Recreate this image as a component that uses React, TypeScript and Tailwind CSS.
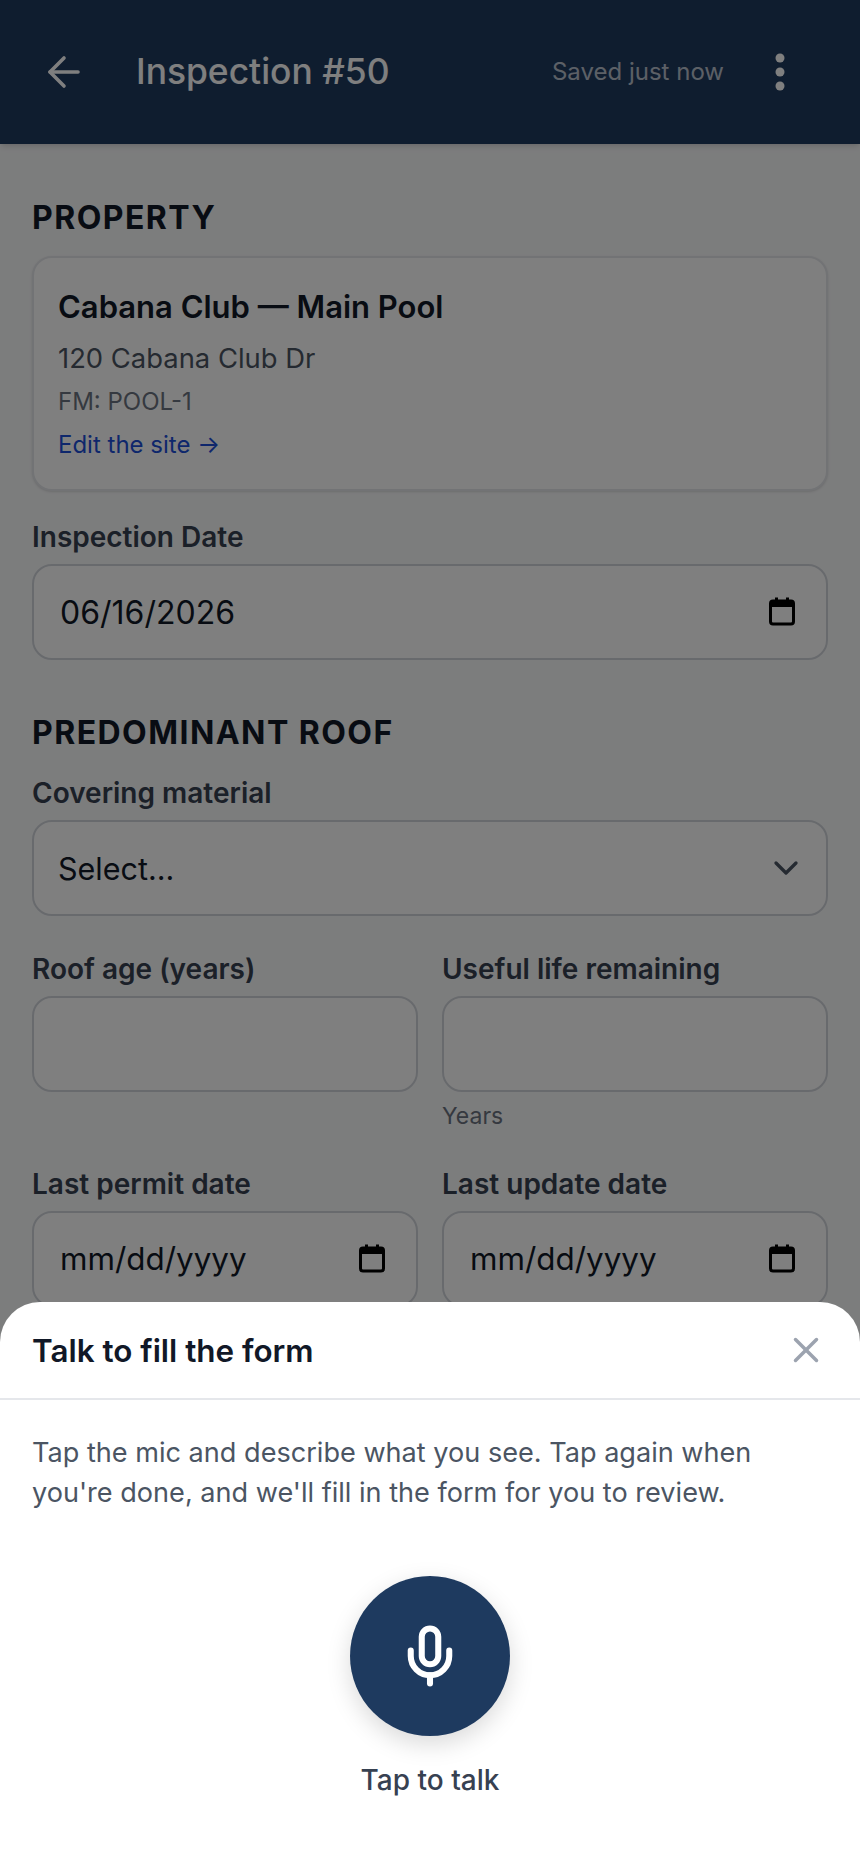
import React from 'react';
import { ArrowLeft, ChevronDown, Mic, X } from 'lucide-react';

const CalendarIcon = () => (
    <svg width="30" height="30" viewBox="0 0 30 30" className="-mt-[2px] shrink-0">
        <path d="M8 1.5h3v3H8zM19 1.5h3v3h-3z" fill="#000" />
        <rect x="3.5" y="5" width="23" height="23" rx="2.5" fill="none" stroke="#000" strokeWidth="3" />
        <rect x="3.5" y="5" width="23" height="6" fill="#000" />
    </svg>
);

const Label: React.FC<{ text: string }> = ({ text }) => (
    <p className="text-[28px] leading-[40px] font-semibold text-[#374151]">{text}</p>
);

const Heading: React.FC<{ text: string }> = ({ text }) => (
    <h2 className="text-[32px] leading-[40px] font-bold tracking-[1.45px] text-[#111827]">{text}</h2>
);

const InputBox: React.FC<{ children?: React.ReactNode }> = ({ children }) => (
    <div className="mt-[7px] flex h-[96px] items-center justify-between rounded-[20px] border-2 border-[#d1d5db] bg-white pl-[26px] pr-[29px] text-[32px] text-[#111827]">
        {children}
    </div>
);

const App: React.FC = () => {
    return (
        <div className="relative h-[1864px] w-full overflow-hidden bg-[#f9fafb] font-['Inter',sans-serif]">
            <header className="flex h-[144px] items-center bg-[#1e3a5f] pl-[40px] pr-[74px] shadow-md">
                <ArrowLeft size={48} strokeWidth={1.8} className="text-white" />
                <h1 className="ml-[48px] flex-1 text-[35.4px] font-medium text-white">Inspection #50</h1>
                <span className="mr-[50px] text-[24px] text-white/70">Saved just now</span>
                <svg width="12" height="40" viewBox="0 0 12 40" fill="#fff">
                    <circle cx="6" cy="6" r="4.5" />
                    <circle cx="6" cy="20" r="4.5" />
                    <circle cx="6" cy="34" r="4.5" />
                </svg>
            </header>

            <main className="px-[32px] pt-[54px]">
                <Heading text="PROPERTY" />
                <div className="mt-[18px] h-[235px] rounded-[20px] border-2 border-[#e5e7eb] bg-white px-[24px] pt-[27px] shadow-sm">
                    <p className="text-[31px] leading-[44px] font-semibold text-[#111827]">Cabana Club — Main Pool</p>
                    <p className="mt-[9px] text-[27.4px] leading-[40px] text-[#4b5563]">120 Cabana Club Dr</p>
                    <p className="mt-[6px] text-[24px] leading-[36px] text-[#6b7280]">FM: POOL-1</p>
                    <p className="mt-[7px] text-[24px] leading-[36px] text-[#1d4ed8]">Edit the site →</p>
                </div>

                <div className="mt-[26px]">
                    <Label text="Inspection Date" />
                    <InputBox>
                        <span className="pt-[2px]">06/16/2026</span>
                        <CalendarIcon />
                    </InputBox>
                </div>

                <div className="mt-[53px]">
                    <Heading text="PREDOMINANT ROOF" />
                </div>
                <div className="mt-[20px]">
                    <Label text="Covering material" />
                    <InputBox>
                        <span className="-ml-[2px] pt-[2px] text-[30.5px]">Select...</span>
                        <ChevronDown size={40} strokeWidth={2} className="-mr-[9px] text-[#4b5563]" />
                    </InputBox>
                </div>

                <div className="mt-[33px] grid grid-cols-2 gap-x-[24px]">
                    <div>
                        <Label text="Roof age (years)" />
                        <InputBox />
                    </div>
                    <div>
                        <Label text="Useful life remaining" />
                        <InputBox />
                        <p className="mt-[8px] text-[23px] leading-[32px] text-[#6b7280]">Years</p>
                    </div>
                </div>

                <div className="mt-[32px] grid grid-cols-2 gap-x-[24px]">
                    <div>
                        <Label text="Last permit date" />
                        <InputBox>
                            <span className="pt-[2px] text-[31.4px]">mm/dd/yyyy</span>
                            <CalendarIcon />
                        </InputBox>
                    </div>
                    <div>
                        <Label text="Last update date" />
                        <InputBox>
                            <span className="pt-[2px] text-[31.4px]">mm/dd/yyyy</span>
                            <CalendarIcon />
                        </InputBox>
                    </div>
                </div>
            </main>

            <div className="absolute inset-0 bg-black/50" />

            <section className="absolute inset-x-0 bottom-0 h-[562px] rounded-t-[40px] bg-white">
                <div className="flex h-[98px] items-center justify-between border-b-2 border-[#e5e7eb] pl-[32px] pr-[33px]">
                    <h3 className="pt-[3px] text-[31.4px] font-semibold text-[#111827]">Talk to fill the form</h3>
                    <X size={42} strokeWidth={2} className="text-[#9ca3af]" />
                </div>
                <p className="px-[32px] pt-[33px] text-[27.1px] leading-[40px] text-[#4b5563]">
                    Tap the mic and describe what you see. Tap again when you're done, and we'll fill in the form for you to review.
                </p>
                <div className="mt-[63px] flex flex-col items-center">
                    <button className="flex h-[160px] w-[160px] items-center justify-center rounded-full bg-[#1e3a5f] shadow-[0_8px_24px_rgba(0,0,0,0.15)]">
                        <Mic size={66} strokeWidth={2.2} className="text-white" />
                    </button>
                    <p className="mt-[24px] text-[28px] leading-[40px] font-medium text-[#374151]">Tap to talk</p>
                </div>
            </section>
        </div>
    );
};

export default App;
